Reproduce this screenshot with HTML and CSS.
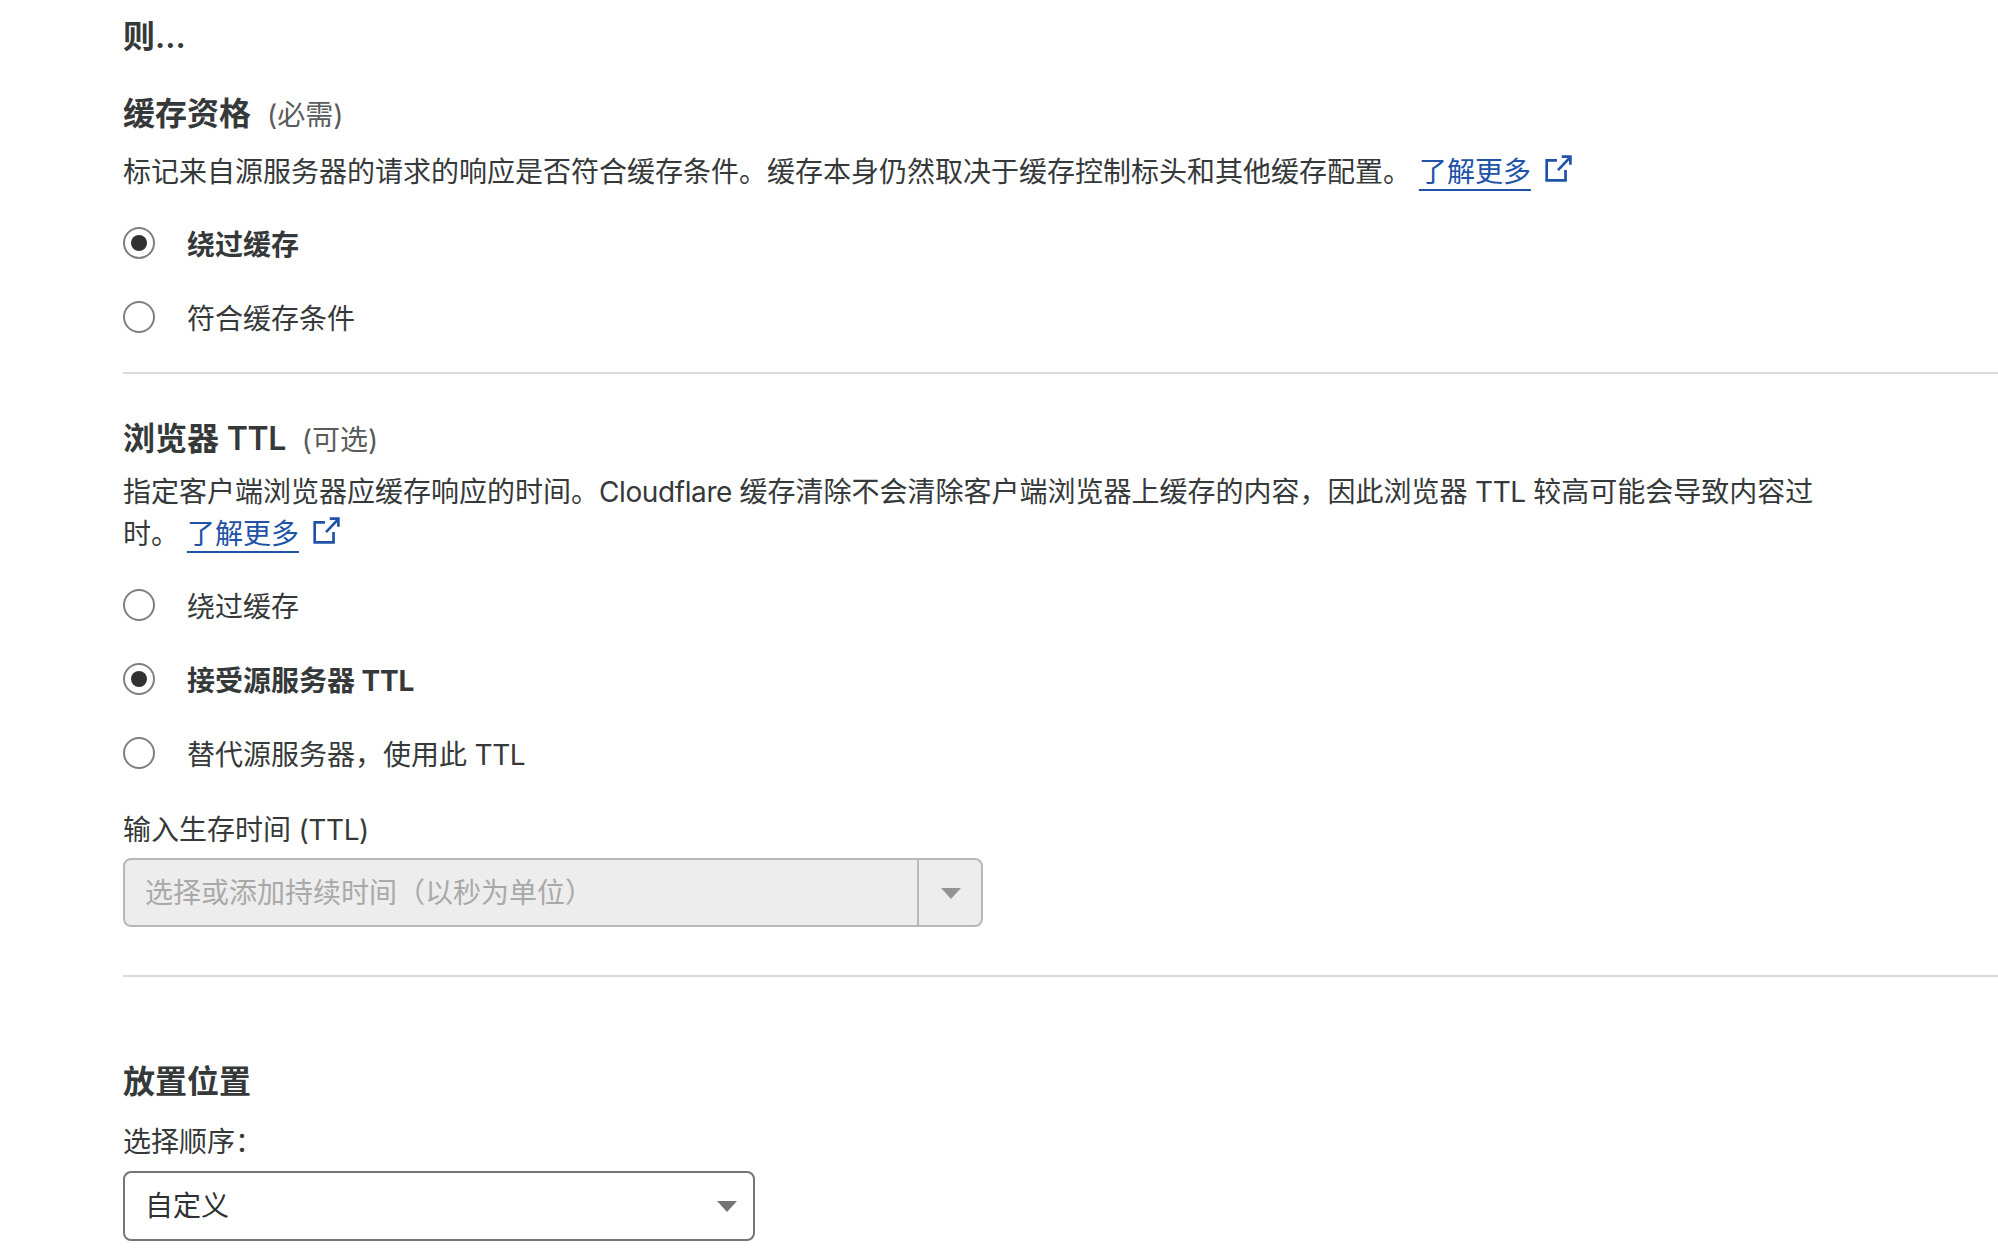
FILE: index.html
```html
<!DOCTYPE html>
<html lang="zh-CN">
<head>
<meta charset="utf-8">
<title>规则</title>
<link rel="stylesheet" href="styles.css">
</head>
<body>
<main class="page">
  <h2 class="step-title">则...</h2>

  <section class="group group-cache">
    <h3 class="group-title">缓存资格<span class="hint">(必需)</span></h3>
    <p class="desc">标记来自源服务器的请求的响应是否符合缓存条件。缓存本身仍然取决于缓存控制标头和其他缓存配置。 <a class="link" href="#">了解更多</a><svg class="ext" viewBox="0 0 26 26" aria-hidden="true"><path d="M12 5H2.500v18.500H20V14M13 14 24 2.500M16.500 1.500H24.500V9"/></svg></p>
    <div class="radios">
      <label class="radio on"><span class="dot"></span>绕过缓存</label>
      <label class="radio"><span class="dot"></span>符合缓存条件</label>
    </div>
  </section>

  <hr class="rule rule-a">

  <section class="group group-ttl">
    <h3 class="group-title">浏览器<span class="latin"> TTL</span><span class="hint">(可选)</span></h3>
    <p class="desc desc-wrap">指定客户端浏览器应缓存响应的时间。<span class="latin">Cloudflare </span>缓存清除不会清除客户端浏览器上缓存的内容，因此浏览器<span class="latin"> TTL </span>较高可能会导致内容过时。 <a class="link" href="#">了解更多</a><svg class="ext" viewBox="0 0 26 26" aria-hidden="true"><path d="M12 5H2.500v18.500H20V14M13 14 24 2.500M16.500 1.500H24.500V9"/></svg></p>
    <div class="radios">
      <label class="radio"><span class="dot"></span>绕过缓存</label>
      <label class="radio on"><span class="dot"></span><span>接受源服务器<span class="strong"> TTL</span></span></label>
      <label class="radio"><span class="dot"></span><span>替代源服务器，使用此<span class="latin"> TTL</span></span></label>
    </div>
    <div class="field-label">输入生存时间<span class="latin"> (TTL)</span></div>
    <div class="combo">
      <span class="combo-text">选择或添加持续时间（以秒为单位）</span>
      <span class="combo-btn"><span class="caret caret-muted"></span></span>
    </div>
  </section>

  <hr class="rule rule-b">

  <section class="group group-place">
    <h3 class="group-title">放置位置</h3>
    <div class="field-label field-label-place">选择顺序：</div>
    <div class="select">
      <span>自定义</span>
      <span class="caret"></span>
    </div>
  </section>
</main>
</body>
</html>
```

FILE: styles.css
```css
* { box-sizing: border-box; }
html, body { margin: 0; padding: 0; background: #fff; }
body {
  height: 1248px;
  overflow: hidden;
  font-family: Inter, "Noto Sans CJK SC", sans-serif;
  font-size: 28px;
  line-height: 42px;
  color: #36393a;
}
.page { padding: 16px 0 0 123px; }
.step-title { margin: 0; font-size: 32px; line-height: 42px; font-weight: 600; }
.group-title { margin: 0; font-size: 32px; line-height: 42px; font-weight: 600; }
.hint { margin-left: 16px; font-size: 28px; font-weight: 400; color: #595b5c; }
.latin { letter-spacing: -0.4px; }
.strong { font-weight: 700; letter-spacing: -0.2px; }
.group-cache { margin-top: 35px; }
.desc { margin: 15px 0 0; }
.desc-wrap { width: 1710px; margin-top: 10px; }
.link { color: #2052a8; text-decoration: underline; text-underline-offset: 7px; text-decoration-thickness: 2px; }
.ext { width: 28px; height: 28px; margin-left: 13px; vertical-align: -1px; fill: none; stroke: #2052a8; stroke-width: 2.500; }
.radios { display: flex; flex-direction: column; gap: 32px; margin-top: 31px; }
.radio { display: flex; align-items: center; gap: 32px; height: 42px; }
.radio.on { font-weight: 600; }
.dot { flex: none; width: 32px; height: 32px; margin-top: -4px; border: 2px solid #7f7f7f; border-radius: 50%; display: flex; align-items: center; justify-content: center; }
.on .dot::after { content: ""; width: 16px; height: 16px; border-radius: 50%; background: #313131; }
.rule { height: 2px; margin: 0; border: 0; background: #d9d9d9; }
.rule-a { margin-top: 32px; }
.group-ttl { margin-top: 44px; }
.field-label { margin-top: 33px; }
.combo {
  display: flex;
  width: 860px;
  height: 69px;
  margin-top: 7px;
  background: #ededed;
  border: 2px solid #b8b8b8;
  border-radius: 8px;
  color: #a9a9a9;
}
.combo-text { flex: 1; padding-left: 20px; line-height: 67px; }
.combo-btn { flex: none; width: 64px; padding: 2px 0 0 2px; border-left: 2px solid #b8b8b8; display: flex; align-items: center; justify-content: center; }
.caret { width: 0; height: 0; border-left: 10px solid transparent; border-right: 10px solid transparent; border-top: 11px solid #757575; }
.caret-muted { border-top-color: #949494; }
.rule-b { margin-top: 48px; }
.group-place { margin-top: 84px; }
.field-label-place { margin-top: 18px; }
.select {
  display: flex;
  align-items: center;
  justify-content: space-between;
  width: 632px;
  height: 70px;
  margin-top: 8px;
  padding: 0 16px 0 20px;
  border: 2px solid #757575;
  border-radius: 8px;
  color: #2e3031;
}
```
